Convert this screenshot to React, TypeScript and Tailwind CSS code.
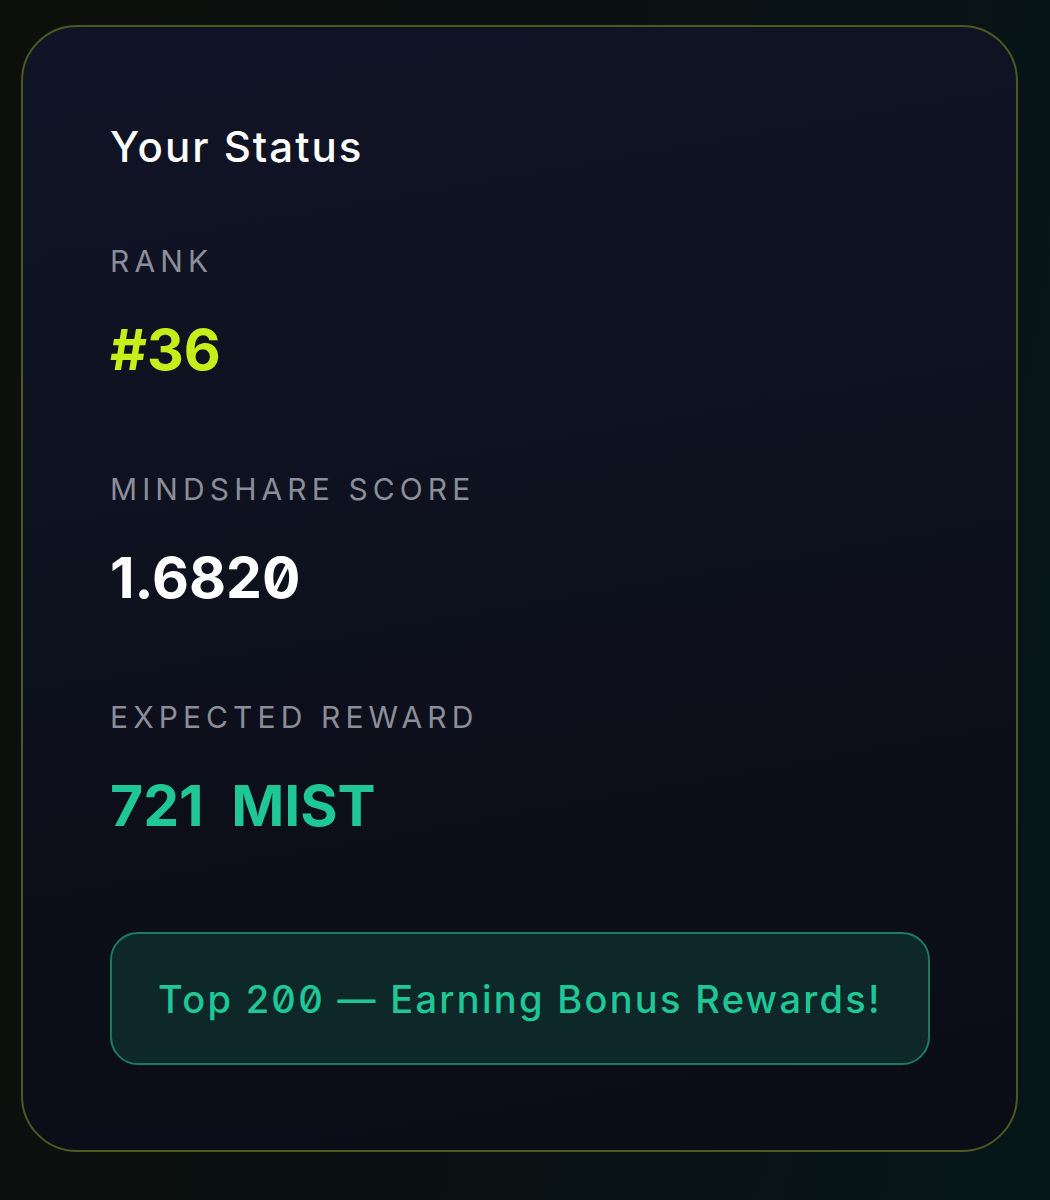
import React from 'react';

type Stat = {
  label: string;
  value: string;
  color: string;
};

const stats: Stat[] = [
  { label: 'RANK', value: '#36', color: 'text-[#c5ef1b]' },
  { label: 'MINDSHARE SCORE', value: '1.6820', color: 'text-white' },
  { label: 'EXPECTED REWARD', value: '721 MIST', color: 'text-[#1ec795]' },
];

export default function App() {
  return (
    <div
      className="min-h-[1200px] w-full bg-[linear-gradient(100deg,#0d0f0b_0%,#0a1112_50%,#061619_100%)] pt-[25px] pl-[21px] pr-[32px]"
      style={{ fontFamily: 'Inter, "Liberation Sans", sans-serif' }}
    >
      <div className="w-[997px] h-[1127px] rounded-[56px] border-2 border-[#4d5a1f] bg-[linear-gradient(170deg,#111426_0%,#0d101c_55%,#0a0c16_100%)] pl-[87px] pr-[86px] pt-[99px] slashed-zero">
        {/* Header */}
        <h1 className="text-[42px] leading-none font-medium text-white tracking-[2px]">Your Status</h1>

        {/* Stats */}
        <div className="mt-[78px] flex flex-col gap-[96px]">
          {stats.map((s) => (
            <div key={s.label} className="flex flex-col gap-[45px]">
              <div className="text-[30px] leading-none font-normal tracking-[0.17em] text-[#8b8e98]">{s.label}</div>
              <div className={`text-[57px] leading-none font-bold tracking-normal [word-spacing:14px] ${s.color}`}>{s.value}</div>
            </div>
          ))}
        </div>

        {/* Bonus badge */}
        <div className="mt-[98px] h-[133px] rounded-[28px] border-2 border-[#1b7a62] bg-[#0e2729] flex items-center justify-center">
          <span className="text-[38px] leading-none font-medium text-[#1ec795] tracking-[2.3px]">
            Top 200 — Earning Bonus Rewards!
          </span>
        </div>
      </div>
    </div>
  );
}
